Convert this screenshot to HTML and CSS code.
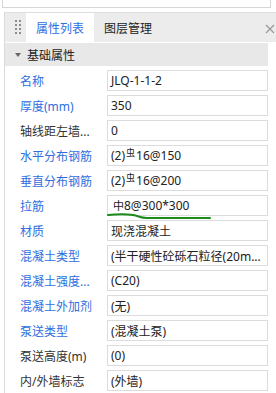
FILE: index.html
```html
<!DOCTYPE html>
<html lang="zh">
<head>
  <meta charset="UTF-8">
  <title>属性列表</title>
  <link rel="stylesheet" href="styles.css">
</head>
<body>
  <!-- верхний блок, от которого видна только нижняя граница -->
  <div class="top-strip"></div>

  <div class="panel">
    <div class="tabbar">
      <div class="grip">
        <i></i><i></i><i></i><i></i><i></i><i></i><i></i><i></i>
      </div>
      <div class="tab active">属性列表</div>
      <div class="tab">图层管理</div>
      <svg class="close" width="10" height="10" viewBox="0 0 10 10">
        <path d="M1 1L9 9M9 1L1 9" stroke="#9a9a9a" stroke-width="1.2" fill="none"/>
      </svg>
    </div>

    <div class="section">
      <span class="caret"></span>基础属性
    </div>

    <div class="rows">
      <div class="row"><span class="label blue">名称</span><div class="value">JLQ-1-1-2</div></div>
      <div class="row"><span class="label blue">厚度(mm)</span><div class="value">350</div></div>
      <div class="row"><span class="label">轴线距左墙...</span><div class="value">0</div></div>
      <div class="row"><span class="label blue">水平分布钢筋</span><div class="value">(2)<span class="bar">&#x866B;</span>16@150</div></div>
      <div class="row"><span class="label blue">垂直分布钢筋</span><div class="value">(2)<span class="bar">&#x866B;</span>16@200</div></div>
      <div class="row">
        <span class="label blue">拉筋</span>
        <div class="value tie"><span class="bar-small">中</span>8@300*300</div>
        <svg class="scribble" width="110" height="10" viewBox="0 0 110 10">
          <path d="M1 4 C10 3 20 3 26 4 C32 5 33 7 40 7 C60 7 80 7 103 7" stroke="#1c8a1c" stroke-width="2" fill="none" stroke-linecap="round"/>
        </svg>
      </div>
      <div class="row"><span class="label blue">材质</span><div class="value">现浇混凝土</div></div>
      <div class="row"><span class="label blue">混凝土类型</span><div class="value">(半干硬性砼砾石粒径(20m...</div></div>
      <div class="row"><span class="label blue">混凝土强度...</span><div class="value">(C20)</div></div>
      <div class="row"><span class="label blue">混凝土外加剂</span><div class="value">(无)</div></div>
      <div class="row"><span class="label blue">泵送类型</span><div class="value">(混凝土泵)</div></div>
      <div class="row"><span class="label">泵送高度(m)</span><div class="value">(0)</div></div>
      <div class="row"><span class="label">内/外墙标志</span><div class="value">(外墙)</div></div>
    </div>
  </div>
</body>
</html>
```

FILE: styles.css
```css
body {
  margin: 0;
  background: #fff;
  color: #333;
  font-family: "Noto Sans", "Noto Sans CJK SC", sans-serif;
  font-size: 12px;
  overflow: hidden;
}

/* верхняя полоска */
.top-strip {
  margin-left: 2px;
  width: 267px;
  height: 7px;
  border: 1px solid #d6d6d6;
  border-top: none;
}

.panel {
  margin-top: 4px;
  margin-left: 4px;
  border-left: 1px solid #dadada;
}

/* вкладки */
.tabbar {
  height: 29px;
  background: #ececec;
  border-top: 1px solid #dedede;
  display: flex;
  align-items: stretch;
}

.grip {
  width: 6px;
  margin: 7px 5px 0 10px;
  display: grid;
  grid-template-columns: 2px 2px;
  grid-auto-rows: 2px;
  column-gap: 2px;
  row-gap: 2px;
}

.grip i {
  background: #8c8c8c;
}

.tab {
  padding: 0 10px;
  display: flex;
  align-items: center;
  font-size: 12px;
  color: #222;
}

.tab.active {
  background: #fff;
  color: #2f6fe4;
}

.close {
  margin-left: auto;
  margin-top: 11px;
  margin-right: 1px;
}

/* заголовок группы */
.section {
  width: 263px;
  height: 23px;
  margin-top: 1px;
  background: #e8e8e8;
  display: flex;
  align-items: center;
  color: #222;
}

.caret {
  width: 0;
  height: 0;
  margin: 0 6px 0 10px;
  border-left: 3px solid transparent;
  border-right: 3px solid transparent;
  border-top: 4px solid #666;
}

/* строки свойств */
.rows {
  padding-top: 2px;
}

.row {
  position: relative;
  height: 25px;
  display: flex;
  align-items: center;
}

.label {
  width: 87px;
  padding-left: 15px;
  white-space: nowrap;
  color: #333;
}

.label.blue {
  color: #2e6ee0;
}

.value {
  box-sizing: border-box;
  width: 161px;
  height: 21px;
  border: 1px solid #dcdcdc;
  background: #fff;
  padding-left: 3px;
  display: flex;
  align-items: center;
  white-space: nowrap;
  overflow: hidden;
  color: #222;
}

.value.tie {
  padding-left: 5px;
}

.bar {
  font-size: 9px;
  position: relative;
  top: -3px;
  margin: 0 1px;
}

.bar-small {
  font-size: 11px;
  position: relative;
  top: -1px;
}

.scribble {
  position: absolute;
  left: 102px;
  top: 18px;
}
```
